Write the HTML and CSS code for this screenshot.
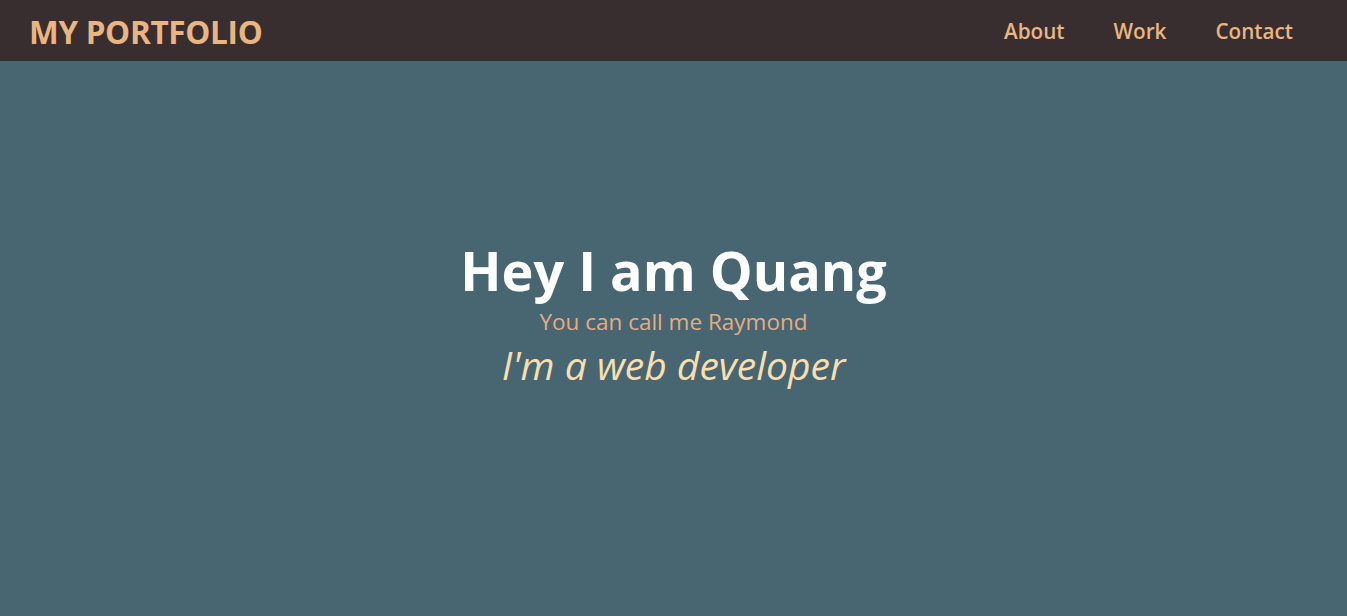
FILE: index.html
```html
<!DOCTYPE html>
<html lang="en">
<head>
<meta charset="utf-8">
<title>My Portfolio</title>
<link rel="stylesheet" href="styles.css">
</head>
<body>
<header class="nav">
  <a class="logo" href="#">MY PORTFOLIO</a>
  <nav class="links">
    <a href="#">About</a>
    <a href="#">Work</a>
    <a href="#">Contact</a>
  </nav>
</header>
<main class="hero">
  <h1 class="title">Hey I am Quang</h1>
  <p class="sub">You can call me Raymond</p>
  <p class="role">I'm a web developer</p>
</main>
</body>
</html>
```
FILE: styles.css
```css
* { box-sizing: border-box; }
html, body { margin: 0; padding: 0; height: 100%; }
body {
  font-family: "Open Sans", "Noto Sans", sans-serif;
  background: #476672;
  display: flex;
  flex-direction: column;
}
.nav {
  height: 61px;
  background: #382e2f;
  display: flex;
  align-items: center;
  justify-content: space-between;
  padding: 0 54px 0 29px;
  flex-shrink: 0;
}
.logo {
  color: #e9b582;
  font-weight: 700;
  font-size: 31.5px;
  text-decoration: none;
  letter-spacing: -0.3px;
  margin-top: 2px;
}
.links { display: flex; gap: 49px; }
.links a {
  color: #e9b582;
  font-weight: 600;
  font-size: 20.7px;
  text-decoration: none;
}
.hero {
  flex: 1;
  display: flex;
  flex-direction: column;
  align-items: center;
  justify-content: center;
  text-align: center;
  padding-bottom: 52px;
}
.title {
  margin: 0;
  color: #ffffff;
  font-weight: 700;
  font-size: 54px;
  line-height: 64px;
}
.sub {
  margin: 5px 0 0;
  color: #e5ac82;
  font-size: 22.5px;
  line-height: 30px;
}
.role {
  margin: 5px 0 0;
  color: #f8dfb0;
  font-style: italic;
  font-size: 39px;
  line-height: 46px;
}
```
